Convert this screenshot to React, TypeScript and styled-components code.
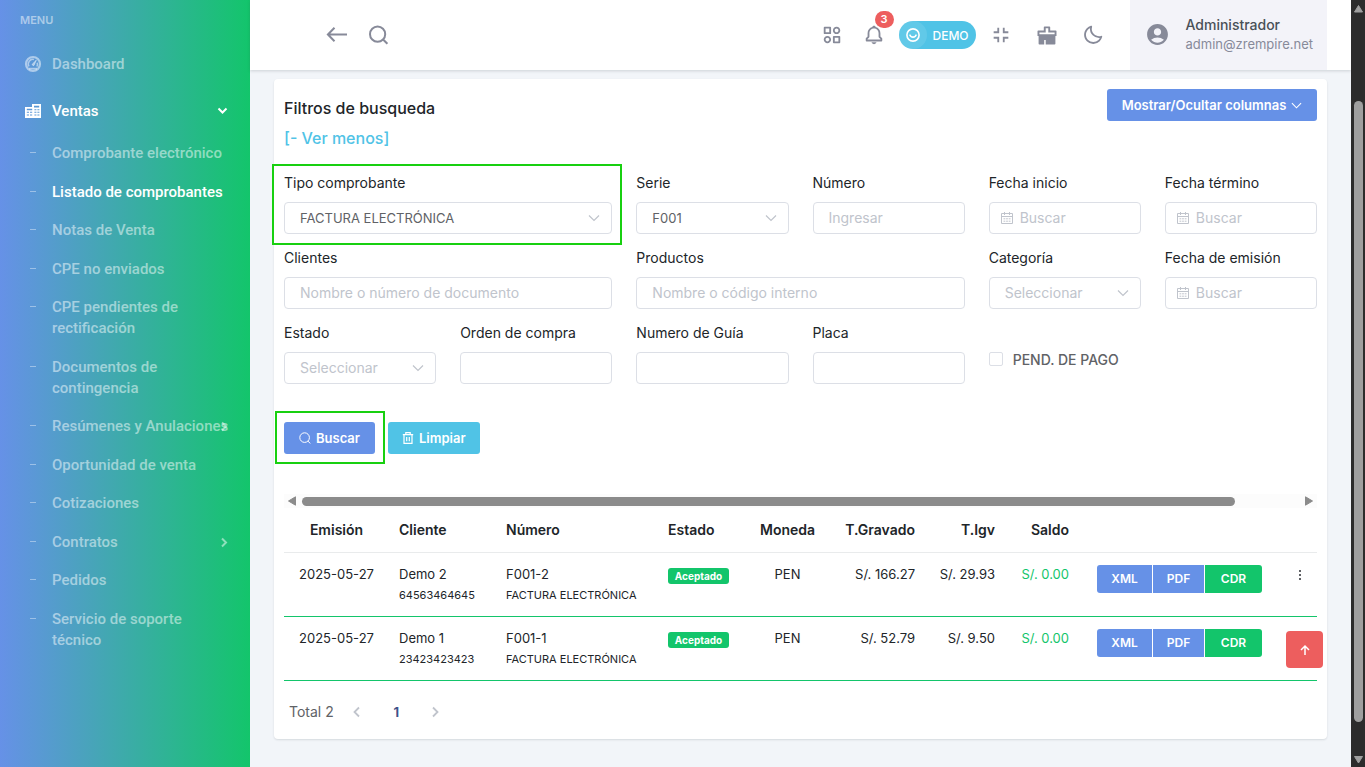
import React from "react";
import styled, { createGlobalStyle } from "styled-components";
import { BiBell, BiCategoryAlt, BiExitFullscreen, BiMoon } from "react-icons/bi";
import { MdAccountCircle } from "react-icons/md";

const c = {
  blue: "#6691e7",
  green: "#13c56b",
  cyan: "#50c3e6",
  red: "#ed5e5e",
  page: "#f2f5f9",
  border: "#dcdfe6",
  placeholder: "#c0c4cc",
  text: "#212529",
  muted: "#606266",
  icon: "#878a99",
  mark: "#18d010",
};

const GlobalStyle = createGlobalStyle`
  *, *::before, *::after { box-sizing: border-box; }
  body {
    margin: 0;
    background: ${c.page};
    color: ${c.text};
    font-family: Inter, "Open Sans", sans-serif;
    font-size: 13px;
  }
  button, input, select { font-family: inherit; }
  button { cursor: pointer; }
`;

/* ---------- shell ---------- */

const Shell = styled.div`
  display: flex;
  min-height: 100vh;
`;

const Content = styled.div`
  flex: 1;
  min-width: 0;
`;

const Main = styled.main`
  padding: 9px 24px 28px;
`;

/* ---------- sidebar ---------- */

const Sidebar = styled.nav`
  flex: 0 0 250px;
  padding: 10px 0 0;
  background: linear-gradient(to right, ${c.blue}, ${c.green});
  font-family: Roboto, sans-serif;
  font-weight: 500;
`;

const MenuTitle = styled.div`
  padding: 0 20px;
  color: rgba(255, 255, 255, 0.5);
  font-family: Inter, sans-serif;
  font-size: 11px;
  font-weight: 600;
  line-height: 20px;
  margin-bottom: 10px;
`;

const NavList = styled.ul`
  list-style: none;
  margin: 0;
  padding: 0;
`;

const NavLink = styled.a<{ $active?: boolean }>`
  display: flex;
  align-items: center;
  height: 47px;
  padding: 0 22px 0 24px;
  color: ${(p) => (p.$active ? "#fff" : "rgba(255, 255, 255, 0.5)")};
  font-size: 15px;
  text-decoration: none;

  > svg:first-child {
    width: 18px;
    height: 18px;
    margin-right: 10px;
  }
  > svg:nth-child(3) {
    margin-left: auto;
  }
`;

const SubItem = styled.li`
  padding: 9px 0;
  &:nth-child(even) {
    padding-bottom: 8px;
  }
`;

const SubLink = styled.a<{ $active?: boolean; $single?: boolean }>`
  position: relative;
  display: flex;
  padding: 0 ${(p) => (p.$single ? "20px" : "60px")} 0 30px;
  color: ${(p) => (p.$active ? "#fff" : "rgba(255, 255, 255, 0.5)")};
  font-size: 15px;
  line-height: 21px;
  text-decoration: none;
  white-space: ${(p) => (p.$single ? "nowrap" : "normal")};

  &::before {
    content: "";
    flex: 0 0 6px;
    height: 1px;
    margin: 9px 16px 0 0;
    background: rgba(255, 255, 255, 0.4);
  }
  > svg {
    position: absolute;
    right: 21px;
    top: 5px;
  }
`;

/* ---------- header ---------- */

const Header = styled.header`
  display: flex;
  align-items: center;
  height: 70px;
  padding: 0 24px 0 76px;
  background: #fff;
  box-shadow: 0 1px 3px rgba(56, 65, 74, 0.2);
`;

const HeaderGroup = styled.div<{ $end?: boolean }>`
  display: flex;
  align-items: center;
  margin-left: ${(p) => (p.$end ? "auto" : "0")};
`;

const IconButton = styled.button<{ $w?: number }>`
  position: relative;
  display: flex;
  align-items: center;
  justify-content: center;
  width: ${(p) => p.$w ?? 42}px;
  height: 42px;
  padding: 0;
  border: 0;
  background: none;
  color: ${c.icon};
`;

const Count = styled.span`
  position: absolute;
  top: -3px;
  right: 1px;
  padding: 0 6px;
  border-radius: 9px;
  background: ${c.red};
  color: #fff;
  font-size: 11px;
  font-weight: 600;
  line-height: 17px;
`;

const DemoPill = styled.button`
  display: flex;
  align-items: center;
  width: 77px;
  height: 28px;
  margin: 0 2px 0 4px;
  padding: 0;
  border: 0;
  border-radius: 14px;
  background: ${c.cyan};
  color: #fff;
  font-size: 12px;
  font-weight: 500;
`;

const DemoIcon = styled.span`
  display: flex;
  align-items: center;
  justify-content: center;
  width: 28px;
  height: 28px;
  margin-right: 6px;
  border-radius: 14px;
  background: rgba(255, 255, 255, 0.1);
`;

const UserBox = styled.button`
  display: flex;
  align-items: center;
  gap: 16px;
  height: 70px;
  min-width: 197px;
  margin-left: 14px;
  padding: 0 14px 2px 15px;
  border: 0;
  background: #f3f3f9;
  color: ${c.icon};
  text-align: left;
`;

const UserName = styled.span`
  display: block;
  color: #495057;
  font-size: 14px;
  font-weight: 500;
  line-height: 20px;
`;

const UserMail = styled.span`
  display: block;
  font-size: 13px;
  line-height: 19px;
`;

/* ---------- card and filters ---------- */

const Card = styled.section`
  padding: 10px 10px 13px;
  border-radius: 4px;
  background: #fff;
  box-shadow: 0 1px 2px rgba(56, 65, 74, 0.15);
`;

const CardHead = styled.div`
  display: flex;
  align-items: flex-start;
  justify-content: space-between;
  margin-bottom: 20px;
`;

const Heading = styled.h1`
  margin: 4px 0 0;
  font-size: 16px;
  font-weight: 500;
  line-height: 30px;
`;

const ToggleLink = styled.a`
  display: block;
  color: ${c.cyan};
  font-size: 16px;
  font-weight: 500;
  line-height: 30px;
  text-decoration: none;
`;

const Button = styled.button<{ $color: string; $wide?: boolean; $marked?: boolean }>`
  position: relative;
  display: flex;
  align-items: center;
  justify-content: center;
  gap: 5px;
  min-width: ${(p) => (p.$wide ? "210px" : "91px")};
  height: 32px;
  padding: 0 14px;
  border: 0;
  border-radius: 3px;
  background: ${(p) => p.$color};
  color: #fff;
  font-size: 13px;
  font-weight: 600;
  ${(p) =>
    p.$marked &&
    `&::after {
      content: "";
      position: absolute;
      inset: -11px -10px -10px -9px;
      border: 2px solid ${c.mark};
    }`}
`;

const Filters = styled.form`
  display: grid;
  grid-template-columns: repeat(6, minmax(0, 1fr));
  gap: 14px 24px;
`;

const Field = styled.div<{ $span?: number; $marked?: boolean }>`
  position: relative;
  grid-column: span ${(p) => p.$span ?? 1};
  ${(p) =>
    p.$marked &&
    `&::after {
      content: "";
      position: absolute;
      inset: -9px -10px -11px -12px;
      border: 2px solid ${c.mark};
      pointer-events: none;
    }`}
`;

const Label = styled.label`
  display: block;
  margin-bottom: 9px;
  font-size: 14px;
  line-height: 20px;
`;

const Control = styled.div`
  position: relative;

  > svg {
    position: absolute;
    top: 10px;
    color: ${c.placeholder};
    pointer-events: none;
  }
`;

const Input = styled.input<{ $icon?: boolean }>`
  width: 100%;
  height: 32px;
  padding: 0 14px 1px ${(p) => (p.$icon ? "30px" : "15px")};
  border: 1px solid ${c.border};
  border-radius: 4px;
  background: #fff;
  color: ${c.muted};
  font-size: 14px;
  &::placeholder {
    color: ${c.placeholder};
    opacity: 1;
  }
`;

const Select = styled.select<{ $empty?: boolean }>`
  width: 100%;
  height: 32px;
  padding: 0 30px 1px 15px;
  border: 1px solid ${c.border};
  border-radius: 4px;
  appearance: none;
  background: #fff;
  color: ${(p) => (p.$empty ? c.placeholder : c.muted)};
  font-size: ${(p) => (p.$empty ? "14px" : "13px")};
`;

const CheckLabel = styled.label`
  display: flex;
  align-items: center;
  gap: 10px;
  height: 72px;
  margin-bottom: -11px;
  color: ${c.muted};
  font-size: 14px;
  font-weight: 500;
  white-space: nowrap;
`;

const Checkbox = styled.input`
  width: 14px;
  height: 14px;
  margin: 0;
  border: 1px solid ${c.border};
  border-radius: 2px;
  appearance: none;
  background: #fff;
`;

const Actions = styled.div`
  display: flex;
  gap: 13px;
  margin: 38px 0 40px;
`;

/* ---------- table ---------- */

const HScroll = styled.div`
  display: flex;
  align-items: center;
  gap: 6px;
  height: 14px;
  padding: 0 4px;
  background: #fcfcfc;
  color: #8b8b8b;
`;

const HTrack = styled.div`
  flex: 1;
  height: 9px;
  padding-right: 64px;
  &::before {
    content: "";
    display: block;
    height: 9px;
    border-radius: 5px;
    background: #8b8b8b;
  }
`;

const Table = styled.table`
  width: 100%;
  table-layout: fixed;
  border-collapse: collapse;
  white-space: nowrap;
`;

const Th = styled.th<{ $align?: string }>`
  height: 44px;
  padding: 0 10px;
  border-bottom: 1px solid #e9ebec;
  font-size: 14px;
  font-weight: 600;
  text-align: ${(p) => p.$align ?? "left"};
`;

const Td = styled.td<{ $align?: string; $color?: string }>`
  height: 64px;
  padding: 11px 10px 0;
  border-bottom: 1px solid ${c.green};
  color: ${(p) => p.$color ?? c.text};
  font-size: 13px;
  line-height: 21px;
  text-align: ${(p) => p.$align ?? "left"};
  vertical-align: top;
`;

const Small = styled.small`
  display: block;
  font-size: 11px;
  line-height: 20px;
`;

const Badge = styled.span`
  display: block;
  width: 61px;
  margin-top: 4px;
  border-radius: 3px;
  background: ${c.green};
  color: #fff;
  font-size: 10px;
  font-weight: 700;
  line-height: 16px;
  text-align: center;
`;

const FileGroup = styled.div`
  display: flex;
  justify-content: center;
  gap: 1px;
  margin-top: 1px;
`;

const FileButton = styled.button<{ $color: string; $w: number }>`
  width: ${(p) => p.$w}px;
  height: 28px;
  padding: 0;
  border: 0;
  background: ${(p) => p.$color};
  color: #fff;
  font-size: 12px;
  font-weight: 600;
  &:first-child {
    border-radius: 3px 0 0 3px;
  }
  &:last-child {
    border-radius: 0 3px 3px 0;
  }
`;

const MoreButton = styled.button`
  display: flex;
  justify-content: center;
  width: 100%;
  padding: 5px 0 0 3px;
  border: 0;
  background: none;
  color: ${c.muted};
`;

const Pager = styled.div`
  display: flex;
  align-items: center;
  height: 28px;
  margin-top: 17px;
  padding-left: 5px;
  color: ${c.muted};
  font-size: 14px;

  > :first-child {
    margin-right: 4px;
  }
`;

const PageButton = styled.button`
  display: flex;
  align-items: center;
  justify-content: center;
  width: 39px;
  height: 28px;
  padding: 0;
  border: 0;
  background: none;
  color: ${c.placeholder};
`;

const PageNumber = styled(PageButton)`
  color: #405189;
  font-size: 13px;
  font-weight: 700;
`;

const TopButton = styled.button`
  position: fixed;
  right: 42px;
  bottom: 99px;
  display: flex;
  align-items: center;
  justify-content: center;
  width: 37px;
  height: 37px;
  padding: 0;
  border: 0;
  border-radius: 4px;
  background: ${c.red};
  color: #fff;
`;

/* ---------- window scroll bar ---------- */

const VScroll = styled.div`
  position: sticky;
  top: 0;
  flex: 0 0 14px;
  display: flex;
  flex-direction: column;
  align-items: center;
  height: 100vh;
  padding: 5px 0 3px;
  background: #2c2c2c;
  color: #9f9f9f;
`;

const VSpace = styled.div<{ $grow: number }>`
  flex: ${(p) => p.$grow} 0 0;
`;

const VThumb = styled(VSpace)`
  width: 9px;
  border-radius: 5px;
  background: #9f9f9f;
`;

/* ---------- icons ---------- */

const Chevron = ({ dir = "down", size = 12, w = 1 }: { dir?: string; size?: number; w?: number }) => {
  const d: Record<string, string> = {
    down: "M1 3.5 6 8.5 11 3.5",
    right: "M4 1.5 8.5 6 4 10.5",
    left: "M8 1.5 3.5 6 8 10.5",
  };
  return (
    <svg width={size} height={size} viewBox="0 0 12 12" fill="none" stroke="currentColor" strokeWidth={w}>
      <path d={d[dir]} />
    </svg>
  );
};

const MenuChevron = ({ dir }: { dir: "down" | "right" }) => (
  <svg width="11" height="11" viewBox="0 0 11 11" fill="none" stroke="currentColor" strokeWidth="2">
    <path d={dir === "down" ? "M1.5 3.5 5.5 7.5 9.5 3.5" : "M4 1.5 8 5.5 4 9.5"} />
  </svg>
);

const GaugeIcon = () => (
  <svg viewBox="0 0 18 18" fill="none" stroke="currentColor">
    <circle cx="9" cy="9" r="7" strokeWidth="2.2" />
    <path d="M5 11.4a4.6 4.6 0 0 1 4.9-6.9M13.2 7.8a4.6 4.6 0 0 1-.3 3.7" strokeWidth="1.5" />
    <path d="M8.2 9.2 12.4 5 10 10.4a1.2 1.2 0 0 1-1.8-1.2Z" fill="currentColor" strokeWidth="0.8" />
    <path d="M5 13.7h8" strokeWidth="1.8" />
  </svg>
);

const BuildingIcon = () => (
  <svg viewBox="0 0 18 18" fill="currentColor">
    <path
      fillRule="evenodd"
      d="M1 5h7V2h9v14H1ZM2.8 6.8v1.4h5.4V6.8ZM2.8 9.8v1H5v-1Zm3.2 0v1h2.2v-1ZM2.8 12.4v1H5v-1Zm3.2 0v1h2.2v-1ZM10 3.8v1.6h5.2V3.8ZM10.4 7.2v1h2v-1Zm3 0v1h2v-1ZM10.4 9.8v1h2v-1Zm3 0v1h2v-1ZM10.4 12.4v1h2v-1Zm3 0v1h2v-1Z"
    />
  </svg>
);

const BackIcon = () => (
  <svg width="22" height="18" viewBox="0 0 22 18" fill="none" stroke="currentColor" strokeWidth="2">
    <path d="M21 8.5H2.5M8.5 1.8 1.9 8.5l6.6 6.7" />
  </svg>
);

const LensIcon = () => (
  <svg width="20" height="20" viewBox="0 0 20 20" fill="none" stroke="currentColor" strokeWidth="2">
    <circle cx="8.6" cy="9.2" r="7.6" />
    <path d="M13.8 14.2 18.4 18.8" />
  </svg>
);

const BrushIcon = () => (
  <svg width="20" height="19" viewBox="0 0 20 19" fill="currentColor">
    <path
      fillRule="evenodd"
      d="M7.6.4h4.8a.8.8 0 0 1 .8.8v3.3h5.5a.8.8 0 0 1 .8.8v4.6h-1.1v7.9a.8.8 0 0 1-.8.8H8.7v-4.7H7.2v4.7H2.4a.8.8 0 0 1-.8-.8V9.9H.5V5.3a.8.8 0 0 1 .8-.8h5.5V1.2a.8.8 0 0 1 .8-.8ZM8.7 2.3v4.1H2.4v1.8h15.2V6.4h-6.3V2.3Z"
    />
  </svg>
);

const SmileIcon = () => (
  <svg width="14" height="14" viewBox="0 0 14 14" fill="none" stroke="currentColor">
    <circle cx="7" cy="7" r="6.1" strokeWidth="1.6" />
    <path d="M3.8 6.6a3.3 3.3 0 0 0 6.4 0" strokeWidth="1.7" />
  </svg>
);

const CalendarIcon = () => (
  <svg width="12" height="12" viewBox="0 0 12 12" fill="none" stroke="currentColor">
    <path d="M.5 1.5h11v10H.5ZM.5 4.5h11M3.5 0v3M8.5 0v3" />
    <path d="M2.5 6.8h7M2.5 9.2h7" strokeDasharray="1.8 0.8" />
  </svg>
);

const SmallLens = () => (
  <svg width="12" height="12" viewBox="0 0 12 12" fill="none" stroke="currentColor">
    <circle cx="5.6" cy="5.6" r="4.8" />
    <path d="M9 9.2 11.4 11.5" />
  </svg>
);

const TrashIcon = () => (
  <svg width="12" height="12" viewBox="0 0 12 12" fill="none" stroke="currentColor" strokeWidth="1.2">
    <path d="M.8 2.7h10.4M3.8 2.5V.7h4.4v1.8M2 2.9v8.5h8V2.9M4.7 5v4.2M7.3 5v4.2" />
  </svg>
);

const Arrow = ({ dir }: { dir: string }) => {
  const d: Record<string, string> = {
    left: "M7.5 0.8v8.4L0.5 5Z",
    right: "M0.5 0.8v8.4L7.5 5Z",
    up: "M0.5 7h8L4.5 0.5Z",
    down: "M0.5 0.5h8L4.5 7Z",
  };
  const tall = dir === "left" || dir === "right";
  return (
    <svg width={tall ? 8 : 9} height={tall ? 10 : 8} viewBox={tall ? "0 0 8 10" : "0 0 9 8"} fill="currentColor">
      <path d={d[dir]} stroke="currentColor" strokeWidth="1" strokeLinejoin="round" />
    </svg>
  );
};

/* ---------- data ---------- */

const submenu = [
  { text: "Comprobante electrónico", single: true },
  { text: "Listado de comprobantes", single: true, active: true },
  { text: "Notas de Venta" },
  { text: "CPE no enviados" },
  { text: "CPE pendientes de rectificación" },
  { text: "Documentos de contingencia" },
  { text: "Resúmenes y Anulaciones", single: true, more: true },
  { text: "Oportunidad de venta", single: true },
  { text: "Cotizaciones" },
  { text: "Contratos", more: true },
  { text: "Pedidos" },
  { text: "Servicio de soporte técnico" },
];

const columns = [
  { text: "Emisión", width: 105, align: "center" },
  { text: "Cliente", width: 107 },
  { text: "Número", width: 162 },
  { text: "Estado", width: 92 },
  { text: "Moneda", width: 75, align: "center" },
  { text: "T.Gravado", width: 100, align: "right" },
  { text: "T.Igv", width: 80, align: "right" },
  { text: "Saldo", width: 74, align: "right" },
  { text: "", width: 201 },
  { text: "", width: 37 },
];

const rows = [
  { date: "2025-05-27", client: "Demo 2", doc: "64563464645", num: "F001-2", base: "S/. 166.27", igv: "S/. 29.93" },
  { date: "2025-05-27", client: "Demo 1", doc: "23423423423", num: "F001-1", base: "S/. 52.79", igv: "S/. 9.50" },
];

/* ---------- form pieces ---------- */

type FieldProps = { id: string; label: string; span?: number; placeholder?: string; marked?: boolean };

const TextField = ({ id, label, span, placeholder }: FieldProps) => (
  <Field $span={span}>
    <Label htmlFor={id}>{label}</Label>
    <Input id={id} type="text" placeholder={placeholder} />
  </Field>
);

const ChevronControl = styled(Control)`
  > svg {
    right: 12px;
  }
`;

const DateControl = styled(Control)`
  > svg {
    left: 12px;
  }
`;

const DateField = ({ id, label }: FieldProps) => (
  <Field>
    <Label htmlFor={id}>{label}</Label>
    <DateControl>
      <Input id={id} type="text" placeholder="Buscar" $icon />
      <CalendarIcon />
    </DateControl>
  </Field>
);

const SelectField = ({ id, label, span, marked, value }: FieldProps & { value?: string }) => (
  <Field $span={span} $marked={marked}>
    <Label htmlFor={id}>{label}</Label>
    <ChevronControl>
      <Select id={id} $empty={!value}>
        <option>{value ?? "Seleccionar"}</option>
      </Select>
      <Chevron w={1.2} />
    </ChevronControl>
  </Field>
);

/* ---------- page ---------- */

export default function App() {
  return (
    <>
      <GlobalStyle />
      <Shell>
        <Sidebar>
          <MenuTitle>MENU</MenuTitle>
          <NavList>
            <li>
              <NavLink href="#dashboard">
                <GaugeIcon />
                <span>Dashboard</span>
              </NavLink>
            </li>
            <li>
              <NavLink href="#ventas" $active>
                <BuildingIcon />
                <span>Ventas</span>
                <MenuChevron dir="down" />
              </NavLink>
              <NavList>
                {submenu.map((s) => (
                  <SubItem key={s.text}>
                    <SubLink href="#sub" $active={s.active} $single={s.single}>
                      {s.text}
                      {s.more && <MenuChevron dir="right" />}
                    </SubLink>
                  </SubItem>
                ))}
              </NavList>
            </li>
          </NavList>
        </Sidebar>

        <Content>
          <Header>
            <HeaderGroup>
              <IconButton type="button" aria-label="Volver" $w={22}>
                <BackIcon />
              </IconButton>
              <IconButton type="button" aria-label="Buscar en el menú" $w={62}>
                <LensIcon />
              </IconButton>
            </HeaderGroup>
            <HeaderGroup $end>
              <IconButton type="button" aria-label="Aplicaciones">
                <BiCategoryAlt size={22} />
              </IconButton>
              <IconButton type="button" aria-label="Notificaciones">
                <BiBell size={22} />
                <Count>3</Count>
              </IconButton>
              <DemoPill type="button">
                <DemoIcon>
                  <SmileIcon />
                </DemoIcon>
                DEMO
              </DemoPill>
              <IconButton type="button" aria-label="Salir de pantalla completa" $w={46}>
                <BiExitFullscreen size={22} />
              </IconButton>
              <IconButton type="button" aria-label="Limpiar caché" $w={46}>
                <BrushIcon />
              </IconButton>
              <IconButton type="button" aria-label="Modo oscuro" $w={46}>
                <BiMoon size={22} />
              </IconButton>
              <UserBox type="button">
                <MdAccountCircle size={25} />
                <span>
                  <UserName>Administrador</UserName>
                  <UserMail>admin@zrempire.net</UserMail>
                </span>
              </UserBox>
            </HeaderGroup>
          </Header>

          <Main>
            <Card>
              <CardHead>
                <div>
                  <Heading>Filtros de busqueda</Heading>
                  <ToggleLink href="#filtros">[- Ver menos]</ToggleLink>
                </div>
                <Button type="button" $color={c.blue} $wide>
                  Mostrar/Ocultar columnas
                  <Chevron size={11} w={1.2} />
                </Button>
              </CardHead>

              <Filters>
                <SelectField id="tipo" label="Tipo comprobante" span={2} value="FACTURA ELECTRÓNICA" marked />
                <SelectField id="serie" label="Serie" value="F001" />
                <TextField id="numero" label="Número" placeholder="Ingresar" />
                <DateField id="inicio" label="Fecha inicio" />
                <DateField id="termino" label="Fecha término" />
                <TextField id="clientes" label="Clientes" span={2} placeholder="Nombre o número de documento" />
                <TextField id="productos" label="Productos" span={2} placeholder="Nombre o código interno" />
                <SelectField id="categoria" label="Categoría" />
                <DateField id="emision" label="Fecha de emisión" />
                <SelectField id="estado" label="Estado" />
                <TextField id="orden" label="Orden de compra" />
                <TextField id="guia" label="Numero de Guía" />
                <TextField id="placa" label="Placa" />
                <Field>
                  <CheckLabel>
                    <Checkbox type="checkbox" />
                    PEND. DE PAGO
                  </CheckLabel>
                </Field>
              </Filters>

              <Actions>
                <Button type="button" $color={c.blue} $marked>
                  <SmallLens />
                  Buscar
                </Button>
                <Button type="button" $color={c.cyan}>
                  <TrashIcon />
                  Limpiar
                </Button>
              </Actions>

              <HScroll>
                <Arrow dir="left" />
                <HTrack />
                <Arrow dir="right" />
              </HScroll>

              <Table>
                <colgroup>
                  {columns.map((col, i) => (
                    <col key={i} width={col.width} />
                  ))}
                </colgroup>
                <thead>
                  <tr>
                    {columns.map((col, i) => (
                      <Th key={i} $align={col.align}>
                        {col.text}
                      </Th>
                    ))}
                  </tr>
                </thead>
                <tbody>
                  {rows.map((r) => (
                    <tr key={r.num}>
                      <Td $align="center">{r.date}</Td>
                      <Td>
                        {r.client}
                        <Small>{r.doc}</Small>
                      </Td>
                      <Td>
                        {r.num}
                        <Small>FACTURA ELECTRÓNICA</Small>
                      </Td>
                      <Td>
                        <Badge>Aceptado</Badge>
                      </Td>
                      <Td $align="center">PEN</Td>
                      <Td $align="right">{r.base}</Td>
                      <Td $align="right">{r.igv}</Td>
                      <Td $align="right" $color={c.green}>
                        S/. 0.00
                      </Td>
                      <Td>
                        <FileGroup>
                          <FileButton type="button" $color={c.blue} $w={55}>
                            XML
                          </FileButton>
                          <FileButton type="button" $color={c.blue} $w={51}>
                            PDF
                          </FileButton>
                          <FileButton type="button" $color={c.green} $w={57}>
                            CDR
                          </FileButton>
                        </FileGroup>
                      </Td>
                      <Td $align="center">
                        <MoreButton type="button" aria-label="Más opciones">
                          <svg width="4" height="12" viewBox="0 0 4 12" fill="currentColor">
                            <path d="M1 1h2v2H1ZM1 5h2v2H1ZM1 9h2v2H1Z" />
                          </svg>
                        </MoreButton>
                      </Td>
                    </tr>
                  ))}
                </tbody>
              </Table>

              <Pager>
                <span>Total 2</span>
                <PageButton type="button" aria-label="Anterior">
                  <Chevron dir="left" w={1.8} />
                </PageButton>
                <PageNumber type="button">1</PageNumber>
                <PageButton type="button" aria-label="Siguiente">
                  <Chevron dir="right" w={1.8} />
                </PageButton>
              </Pager>
            </Card>
          </Main>
        </Content>

        <VScroll>
          <Arrow dir="up" />
          <VSpace $grow={88} />
          <VThumb $grow={621} />
          <VSpace $grow={34} />
          <Arrow dir="down" />
        </VScroll>
      </Shell>

      <TopButton type="button" aria-label="Volver arriba">
        <svg width="12" height="12" viewBox="0 0 12 12" fill="none" stroke="currentColor" strokeWidth="1.5">
          <path d="M6 11V2M2 6l4-4 4 4" />
        </svg>
      </TopButton>
    </>
  );
}
